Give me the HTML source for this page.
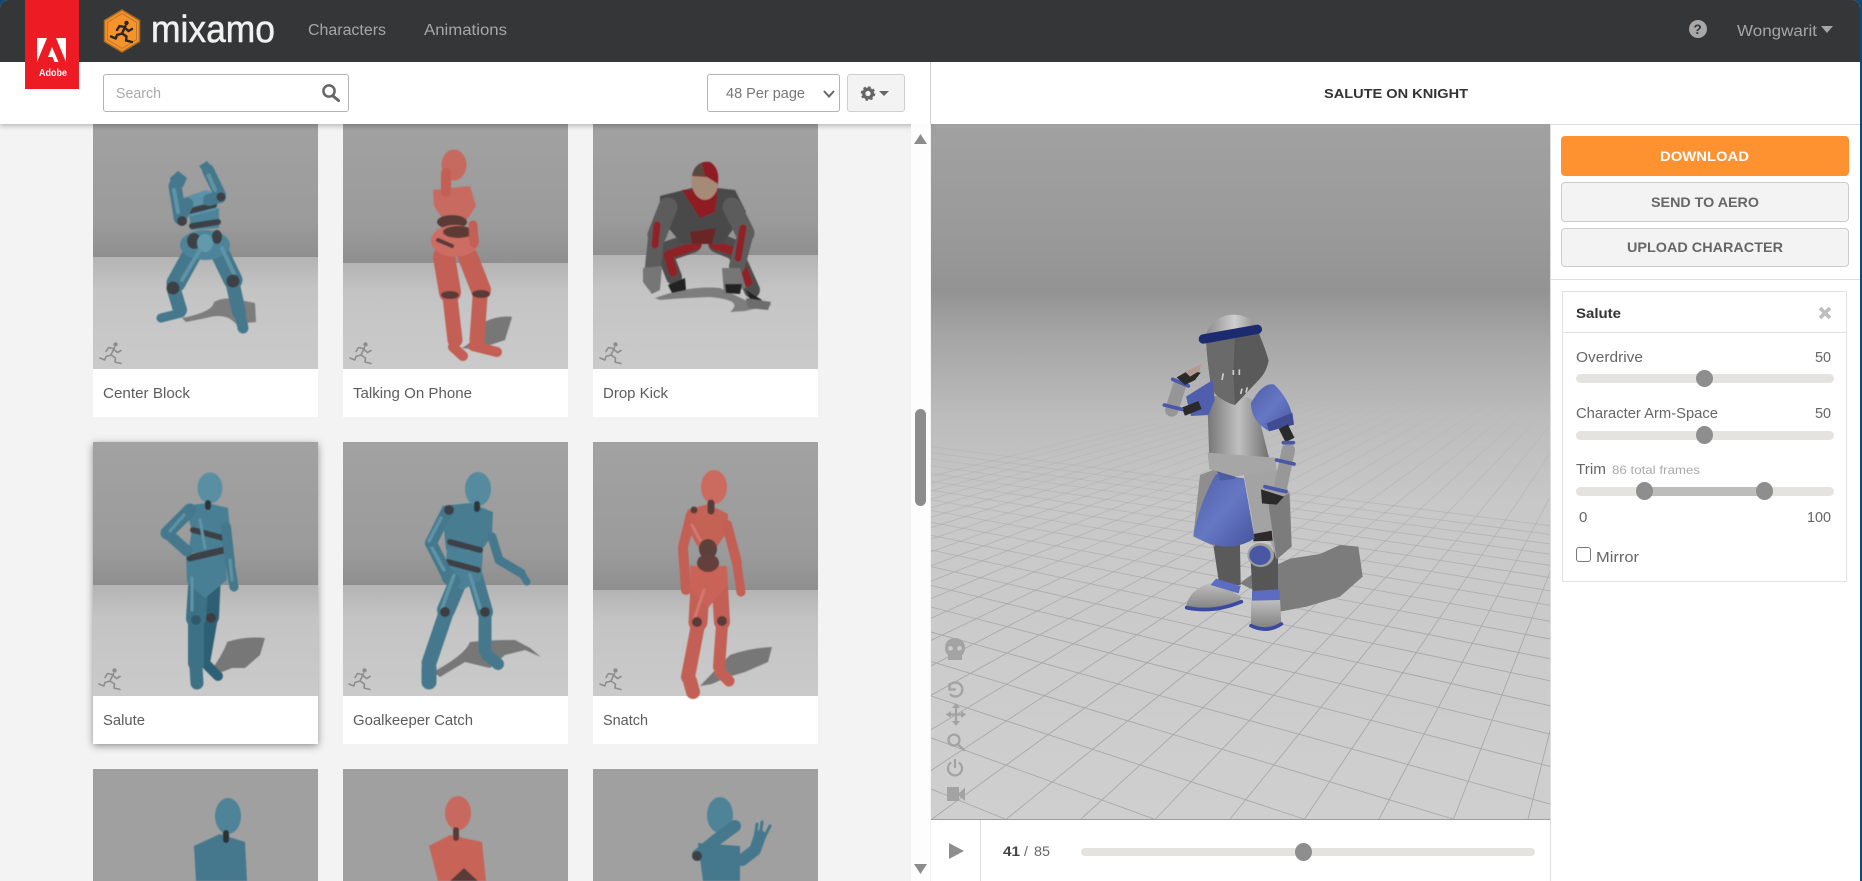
<!DOCTYPE html>
<html lang="en"><head><meta charset="utf-8"><title>Mixamo</title>
<style>
html,body{margin:0;padding:0;width:1862px;height:881px;overflow:hidden;background:#0d4a7c}
#app{position:absolute;left:0;top:0;width:1862px;height:881px;overflow:hidden;background:#f3f3f3;clip-path:inset(0 2px 0 0 round 8px 8px 0 0)}
#app>div{position:absolute;box-sizing:border-box}
svg{position:absolute;left:0;top:0}
text{font-family:"Liberation Sans",sans-serif;white-space:pre}
.lb{font-size:15px;fill:#5c5c5c}
.p{font-size:15px;fill:#666}
.btn{font-size:14px;font-weight:bold;fill:#666}
.track{background:#e4e3df;border-radius:5px;height:9px}
.thumb{background:#8e8e8e;border-radius:50%;width:17px;height:17px}
.g{fill:none;stroke-linecap:round;stroke-linejoin:round}
.t{stroke:#44788c}.td{stroke:#2f6174}.th{stroke:#5f93a6}.r{stroke:#c35f55}.rh{stroke:#d3786e}.k{stroke:#3e4144}.rk{stroke:#5a3b38}
</style></head><body>
<div id="app">
<svg width="1862" height="881" viewBox="0 0 1862 881">
<defs>
<linearGradient id="wall" x1="0" y1="0" x2="0" y2="1"><stop offset="0" stop-color="#a2a2a2"/><stop offset=".75" stop-color="#9b9b9b"/><stop offset="1" stop-color="#8f8f8f"/></linearGradient>
<linearGradient id="floor" x1="0" y1="0" x2="0" y2="1"><stop offset="0" stop-color="#b4b4b4"/><stop offset=".3" stop-color="#c4c4c4"/><stop offset="1" stop-color="#cacaca"/></linearGradient>
<linearGradient id="vw" x1="0" y1="124" x2="0" y2="820" gradientUnits="userSpaceOnUse">
<stop offset="0" stop-color="#a1a1a1"/><stop offset=".15" stop-color="#9a9a9a"/><stop offset=".24" stop-color="#939393"/><stop offset=".3" stop-color="#a4a4a4"/><stop offset=".42" stop-color="#bcbcbc"/><stop offset=".55" stop-color="#c8c8c8"/><stop offset="1" stop-color="#cfcfcf"/></linearGradient>
<linearGradient id="gl" x1="0" y1="370" x2="0" y2="640" gradientUnits="userSpaceOnUse"><stop offset="0" stop-color="#aaa" stop-opacity="0"/><stop offset="1" stop-color="#a8a8a8"/></linearGradient>
<linearGradient id="steel" x1="0" y1="0" x2="1" y2="0"><stop offset="0" stop-color="#757575"/><stop offset=".5" stop-color="#c0c0c0"/><stop offset="1" stop-color="#6e6e6e"/></linearGradient>
<linearGradient id="boot" x1="0" y1="0" x2="0" y2="1"><stop offset="0" stop-color="#c2c2c2"/><stop offset="1" stop-color="#808080"/></linearGradient>
<linearGradient id="dome" x1="0" y1="0" x2="1" y2="0"><stop offset="0" stop-color="#8a8a8a"/><stop offset=".55" stop-color="#cfcfcf"/><stop offset="1" stop-color="#8c8c8c"/></linearGradient>
<linearGradient id="blue" x1="0" y1="0" x2="1" y2="1"><stop offset="0" stop-color="#4f5fa8"/><stop offset=".5" stop-color="#6677c4"/><stop offset="1" stop-color="#46559e"/></linearGradient>
<clipPath id="vc"><rect x="931" y="124" width="619" height="696"/></clipPath>
<filter id="soft" x="-5%" y="-5%" width="110%" height="110%"><feGaussianBlur stdDeviation=".5"/></filter>
<filter id="sh" x="-10%" y="-10%" width="120%" height="120%"><feDropShadow dx="0" dy="2" stdDeviation="4" flood-color="#000" flood-opacity=".42"/></filter>
<symbol id="run" viewBox="0 0 22 22" overflow="visible">
<circle cx="15.5" cy="2.4" r="2.2" stroke="none" fill="currentColor"/>
<path d="M14.5 5.5L11 13M13.5 6.5L8.500 5.500L6 9.500M14 7.500L17.500 10.500L21 8.500M11 13L6 14.500L4.800 18L0 16M11 13L15.500 16L15 20L21 21.500" fill="none" stroke-linecap="round" stroke-linejoin="round"/>
</symbol>
</defs>

<!-- cards row 1 -->
<rect x="93" y="115" width="225" height="142" fill="url(#wall)"/><rect x="93" y="257" width="225" height="112" fill="url(#floor)"/><rect x="93" y="369" width="225" height="48" fill="#fff"/>
<rect x="343" y="115" width="225" height="148" fill="url(#wall)"/><rect x="343" y="263" width="225" height="106" fill="url(#floor)"/><rect x="343" y="369" width="225" height="48" fill="#fff"/>
<rect x="593" y="115" width="225" height="140" fill="url(#wall)"/><rect x="593" y="255" width="225" height="114" fill="url(#floor)"/><rect x="593" y="369" width="225" height="48" fill="#fff"/>
<!-- row 2 -->
<rect x="93" y="442" width="225" height="302" fill="#fff" filter="url(#sh)"/>
<rect x="93" y="442" width="225" height="143" fill="url(#wall)"/><rect x="93" y="585" width="225" height="111" fill="url(#floor)"/>
<rect x="343" y="442" width="225" height="143" fill="url(#wall)"/><rect x="343" y="585" width="225" height="111" fill="url(#floor)"/><rect x="343" y="696" width="225" height="48" fill="#fff"/>
<rect x="593" y="442" width="225" height="148" fill="url(#wall)"/><rect x="593" y="590" width="225" height="106" fill="url(#floor)"/><rect x="593" y="696" width="225" height="48" fill="#fff"/>
<!-- row 3 -->
<rect x="93" y="769" width="225" height="112" fill="#a0a0a0"/><rect x="343" y="769" width="225" height="112" fill="#a0a0a0"/><rect x="593" y="769" width="225" height="112" fill="#a0a0a0"/>

<g filter="url(#soft)">
<!-- Center Block -->
<path d="M182 318Q213 312 214 302Q225 296 240 300L255 303L256 322L236 324Q226 312 206 318L186 322Z" fill="#7d7d7d"/>
<g class="g t"><path stroke-width="19" d="M197 245L176 283"/><path stroke-width="14" d="M174 290L180 310"/><path stroke-width="9" d="M181 313L161 318"/>
<path stroke-width="19" d="M216 245L233 280"/><path stroke-width="14" d="M233 285L239 312"/><path stroke-width="11" d="M240 314L243 328"/></g>
<ellipse cx="205" cy="245" rx="25" ry="15" fill="#4d8499"/>
<ellipse cx="194" cy="241" rx="7" ry="8" fill="#3e4144"/><ellipse cx="217" cy="237" rx="5" ry="7" fill="#3e4144"/>
<ellipse cx="205" cy="243" rx="8" ry="9" fill="#6499ac"/>
<path d="M189 214L219 208L219 228L191 230Z" fill="#4d8499"/>
<path d="M183 198L206 190L220 195L216 210L188 217Z" fill="#5b92a7"/>
<path class="g k" stroke-width="6" d="M190 211L214 205M192 226L218 222"/>
<g class="g t"><path stroke-width="13" d="M187 204L180 218"/><path stroke-width="13" d="M180 216L175 186"/><path stroke-width="12" d="M209 200L220 197"/><path stroke-width="12" d="M220 195L208 170"/></g>
<path class="g th" stroke-width="4" d="M178 212L174 190M215 190L208 174M200 250L182 280M222 248L234 274"/>
<g fill="#3e4144"><circle cx="182" cy="221" r="5"/><circle cx="221" cy="197" r="4.500"/><circle cx="173" cy="288" r="6.500"/><circle cx="233" cy="281" r="6.500"/></g>
<path d="M170 178L178 171L187 178L183 187L171 187ZM199 166L207 161L214 170L206 175Z" fill="#44788c"/>

<!-- Talking on phone -->
<path d="M462 348Q480 338 484 322Q500 315 512 317L505 340L490 345L478 350Z" fill="#777"/>
<g class="g r"><path stroke-width="22" d="M444 257L450 292"/><path stroke-width="20" d="M468 257L481 290"/><path stroke-width="15" d="M450 297L455 340"/><path stroke-width="15" d="M480 297L477 340"/><path stroke-width="10" d="M453 347L463 356"/><path stroke-width="10" d="M473 346L497 352"/></g>
<ellipse cx="454" cy="165" rx="12.500" ry="15.500" fill="#c66b61"/>
<path d="M433 190L470 186L476 206L464 224L446 224L434 206Z" fill="#c86a60"/>
<ellipse cx="452" cy="222" rx="15" ry="7" fill="#5a3b38"/>
<ellipse cx="455" cy="241" rx="24" ry="16" fill="#cc6c62"/>
<ellipse cx="458" cy="232" rx="15" ry="6" fill="#5d3a36"/><path class="g rk" stroke-width="4" d="M438 240L452 246"/>
<path class="g r" stroke-width="10" d="M446 192L446 173"/><path class="g r" stroke-width="9" d="M473 225L474 243"/>
<g fill="#5a3b38"><ellipse cx="450" cy="295" rx="9" ry="4"/><ellipse cx="481" cy="294" rx="9" ry="4"/></g>

<!-- Drop Kick -->
<path d="M655 298Q690 285 720 288L745 300L772 305L745 311L730 312Q745 300 710 297Q680 298 660 300Z" fill="#7d7d7d"/>
<g class="g" stroke="#4e4e4e"><path stroke-width="20" d="M692 243L665 252"/><path stroke-width="16" d="M665 254L674 277"/><path stroke-width="20" d="M718 243L735 250"/><path stroke-width="16" d="M735 252L752 290"/></g>
<g class="g" stroke="#8e2027"><path stroke-width="9" d="M697 245L668 255L673 272M714 245L736 252L748 282"/></g>
<path d="M660 196L700 186L735 190L746 212L722 244L682 244L660 218Z" fill="#484848"/>
<path d="M682 190L718 188L715 212L700 218Z" fill="#8e1c22"/>
<path d="M690 232L716 228L712 244L692 244Z" fill="#6a2528"/>
<g class="g" stroke="#5c5c5c"><path stroke-width="19" d="M668 207L657 235"/><path stroke-width="16" d="M656 238L653 267"/><path stroke-width="19" d="M732 207L745 233"/><path stroke-width="16" d="M745 236L737 266"/></g>
<path class="g" stroke="#8e2027" stroke-width="7" d="M657 225L655 245M743 228L738 258"/>
<path fill="#767676" d="M643 268L662 266L660 290L652 294L643 282ZM722 268L740 268L746 288L724 294Z"/>
<path fill="#222" d="M668 285L685 278L686 290L672 293ZM725 284L742 284L740 294L726 293ZM746 290L762 300L752 304Z"/>
<path fill="#6d6d6d" d="M746 298L771 302L768 310L748 308Z"/>
<ellipse cx="705" cy="181" rx="13.500" ry="19" fill="#a58a78"/>
<path d="M692 176Q696 160 710 162Q720 168 718 184L707 177Z" fill="#8e1c22"/><path d="M692 176Q694 165 702 163L705 176Z" fill="#5a4a40"/>

<!-- Salute -->
<path d="M213 668Q225 650 227 642Q245 636 265 638L260 655L245 668L232 668L222 672Z" fill="#777"/>
<g class="g td"><path stroke-width="16" d="M213 573L211 617"/><path stroke-width="13" d="M211 620L204 660"/><path stroke-width="10" d="M207 665L218 676"/></g>
<g class="g" stroke="#3c7186"><path stroke-width="20" d="M199 573L196 618"/><path stroke-width="16" d="M196 622L196 663"/><path stroke-width="13" d="M196 667L197 683"/></g>
<path d="M184 506L207 503L228 508L230 530L224 553L188 553L192 530Z" fill="#4a7f94"/>
<path d="M186 556L225 552L227 580L205 598L187 582Z" fill="#4a7f94"/>
<path class="g k" stroke-width="6" d="M193 530L223 538"/><path class="g k" stroke-width="7" d="M190 558L224 550"/>
<ellipse cx="210" cy="488" rx="12.500" ry="15.500" fill="#5a8ea3"/>
<path class="g" stroke="#2d3538" stroke-width="6" d="M208 503L208 507"/>
<g class="g t"><path stroke-width="13" d="M190 510L167 533"/><path stroke-width="11" d="M167 533L187 551"/><path stroke-width="10" d="M226 527L230 563"/><path stroke-width="9" d="M230 563L234 587"/></g>
<path class="g th" stroke-width="3" d="M184 515L170 531M200 520L205 548M230 560L232 580M192 578L192 610"/>
<circle cx="196" cy="620" r="5" fill="#2f5a6c"/><circle cx="211" cy="618" r="5" fill="#3a3d40"/>

<!-- Goalkeeper Catch -->
<path d="M433 672Q465 655 470 642Q490 640 515 640L530 648L541 657L525 650L505 655L490 668L465 662L440 677Z" fill="#777"/>
<g class="g t"><path stroke-width="18" d="M463 570L446 610"/><path stroke-width="15" d="M446 613L429 663"/><path stroke-width="15" d="M429 668L429 682"/><path stroke-width="16" d="M473 570L485 612"/><path stroke-width="13" d="M485 615L485 650"/><path stroke-width="12" d="M487 655L498 664"/></g>
<path d="M442 506L470 503L493 512L492 535L482 550L446 550Z" fill="#467c91"/>
<path d="M447 548L483 552L481 580L462 590L445 580Z" fill="#4b8196"/>
<path class="g k" stroke-width="6" d="M450 542L480 550M448 562L478 570"/>
<ellipse cx="478" cy="489" rx="13" ry="17" fill="#558a9f"/>
<path class="g" stroke="#2d3538" stroke-width="6" d="M477 504L477 509"/>
<g class="g t"><path stroke-width="12" d="M446 513L431 543"/><path stroke-width="12" d="M431 543L446 573"/><path stroke-width="15" d="M449 577L453 581"/><path stroke-width="9" d="M492 537L499 560"/><path stroke-width="9" d="M499 560L521 573"/><path stroke-width="7" d="M522 574L527 582"/></g>
<path class="g th" stroke-width="3.500" d="M441 518L429 541M432 548L444 570M454 575L442 608M470 575L480 608"/>
<circle cx="445" cy="612" r="5" fill="#3a3d40"/><circle cx="485" cy="612" r="5" fill="#3a3d40"/><circle cx="449" cy="510" r="5" fill="#3e4144"/>

<!-- Snatch -->
<path d="M700 686Q715 670 730 655Q750 648 772 647L768 662L745 672L725 678L712 684Z" fill="#777"/>
<g class="g r"><path stroke-width="19" d="M700 587L698 622"/><path stroke-width="14" d="M698 625L688 677"/><path stroke-width="14" d="M690 681L693 692"/><path stroke-width="16" d="M720 587L722 622"/><path stroke-width="12" d="M722 625L719 667"/><path stroke-width="11" d="M720 672L729 681"/></g>
<path d="M687 510L708 504L728 514L727 532L716 548L700 550L691 535Z" fill="#c46257"/>
<ellipse cx="708" cy="549" rx="9" ry="10" fill="#5c3f3b"/>
<path d="M690 566L727 566L728 585L708 608L691 590Z" fill="#c96358"/>
<ellipse cx="708" cy="563" rx="11" ry="9" fill="#63403b"/>
<ellipse cx="714" cy="487" rx="13" ry="17" fill="#cb6a5f"/>
<path class="g rk" stroke-width="7" d="M711 503L711 511"/>
<g class="g r"><path stroke-width="10" d="M691 515L683 547"/><path stroke-width="10" d="M683 549L686 590"/><path stroke-width="10" d="M727 525L737 563"/><path stroke-width="9" d="M737 565L741 592"/></g>
<path class="g rh" stroke-width="3" d="M704 590L694 620M692 525L700 540"/>
<circle cx="697" cy="622" r="5" fill="#5a3b38"/><circle cx="722" cy="621" r="5" fill="#5a3b38"/><circle cx="694" cy="510" r="3.500" fill="#5a3b38"/>

<!-- row 3 figures -->
<path d="M194 846L220 834L245 842L247 881L196 881Z" fill="#44788c"/>
<ellipse cx="228" cy="816" rx="13" ry="18" fill="#4f8398"/>
<path class="g" stroke="#2c3033" stroke-width="6" d="M226 833L226 840"/>
<path d="M429 846L450 835L482 842L486 881L438 881Z" fill="#c86459"/>
<ellipse cx="458" cy="813" rx="13" ry="17" fill="#c7695e"/>
<path class="g rk" stroke-width="6" d="M456 830L456 838"/>
<path d="M450 881L464 868L478 881Z" fill="#5a3b38"/>
<path d="M698 843L740 846L740 881L703 881Z" fill="#44788c"/>
<ellipse cx="720" cy="815" rx="13" ry="18" fill="#4f8398"/>
<g class="g t" stroke-width="12"><path d="M698 855L716 840L735 826"/><path d="M742 860L755 850L760 836"/></g>
<path d="M755 838L757 824M760 838L762 822M764 838L770 826" class="g t" stroke-width="3"/>
<circle cx="697" cy="856" r="5" fill="#3e4144"/>
</g>

<g color="#8d8d8d" stroke="#8d8d8d" stroke-width="1.600">
<use href="#run" x="100" y="342" width="22" height="22"/><use href="#run" x="350" y="342" width="22" height="22"/><use href="#run" x="600" y="342" width="22" height="22"/>
<use href="#run" x="99" y="668" width="22" height="22"/><use href="#run" x="349" y="668" width="22" height="22"/><use href="#run" x="600" y="668" width="22" height="22"/>
</g>

<!-- viewer -->
<rect x="931" y="124" width="619" height="696" fill="url(#vw)"/>
<g clip-path="url(#vc)" fill="none" stroke="url(#gl)" stroke-width=".9">
<path d="M1660 290L1602.500 819M1660 290L1528 819M1660 290L1453.500 819M1660 290L1379 819M1660 290L1304.500 819M1660 290L1230 819M1660 290L1155.500 819M1660 290L1081 819M1660 290L1006.500 819M1660 290L932 819M1660 290L857.500 819M1660 290L783 819M1660 290L708.500 819M1660 290L634 819M1660 290L559.500 819M1660 290L485 819M1660 290L410.500 819M1660 290L336 819M1660 290L261.500 819M1660 290L187 819M1660 290L112.500 819M1660 290L38 819M1660 290L-36.500 819M1660 290L-111 819M1660 290L-185.500 819M1660 290L-260 819M1660 290L-334.500 819M1660 290L-409 819"/>
<path d="M-300 290L1005 819M-300 290L1154 819M-300 290L1304 819M-300 290L1453 819M-300 290L1604 819M-300 290L1754 819M-300 290L1904 819M-300 290L2054 819M-300 290L2204 819M-300 290L2354 819M-300 290L2504 819M-300 290L2654 819M-300 290L2804 819M-300 290L2954 819M-300 290L3104 819M-300 290L3254 819M-300 290L3404 819M-300 290L3554 819M-300 290L3704 819M-300 290L3854 819"/>
</g>

<!-- knight -->
<g transform="translate(1120 290) scale(.33333)" filter="url(#soft)">
<path d="M360 880Q420 830 480 820L510 806L600 792L660 765L715 770L728 860L660 920L560 950L480 965L400 900Z" fill="#7c7c7c"/>
<path d="M280 765L360 765L362 885L298 885Z" fill="#5a5a5a"/>
<path d="M390 785L474 785L474 912L398 912Z" fill="#565656"/>
<path d="M240 555L292 535L285 770L220 740Z" fill="#8e8e8e"/>
<path d="M372 555L462 525L510 610L515 770L470 808L452 755L405 750L395 680Z" fill="#a3a3a3"/>
<path d="M400 732L455 722L458 752L400 754Z" fill="#2f2b2b"/>
<path d="M445 640L508 610L515 770L470 808Z" fill="#7c7c7c"/>
<path d="M288 552L372 565L404 745Q320 798 220 737Q238 640 288 552Z" fill="url(#blue)"/>
<path d="M286 532L342 538L347 566L300 572Z" fill="#4c5ba2"/>
<path d="M262 325Q350 295 405 335L450 515L268 515Z" fill="url(#steel)"/>
<path d="M263 488L466 503L470 540L345 560L268 537Z" fill="#a6a6a6"/>
<path d="M258 148L412 120Q436 175 446 212Q440 245 418 268L345 345Q310 335 284 310L272 280Q262 215 258 148Z" fill="#5a5a5a"/>
<path d="M258 148L345 132L340 255L345 345Q310 335 284 310L272 280Q262 215 258 148Z" fill="#6a6a6a"/>
<path d="M258 132Q285 72 345 74Q395 78 414 116Z" fill="url(#dome)"/>
<path d="M250 147L412 118" stroke="#1f2a70" stroke-width="28" fill="none" stroke-linecap="round"/>
<path d="M362 312L366 296M378 308L382 292M306 270L310 250M340 255L340 240M358 255L358 238" stroke="#cfcfcf" stroke-width="5" fill="none"/>
<path d="M393 340Q425 278 462 283Q512 330 520 395L445 422Q393 392 393 340Z" fill="url(#blue)"/>
<path d="M440 400L517 368L522 404L447 424Z" fill="#3f4d95"/>
<path d="M490 410L510 450" stroke="#2a2a2a" stroke-width="30" fill="none"/>
<path d="M505 480L482 590" stroke="#989898" stroke-width="40" fill="none" stroke-linecap="round"/>
<path d="M470 510L522 522M435 590L498 605M490 458L520 458" stroke="#4a59a8" stroke-width="11" fill="none" stroke-linecap="round"/>
<path d="M423 598L492 620L470 644L426 640Z" fill="#2a2a2a"/>
<path d="M198 320L278 270L284 330L265 375L213 378Z" fill="#4f5fae"/>
<path d="M190 365L240 345" stroke="#2a2a2a" stroke-width="26" fill="none"/>
<path d="M155 360L180 282" stroke="#969696" stroke-width="40" fill="none" stroke-linecap="round"/>
<path d="M133 345L185 358M158 268L205 288" stroke="#4a59a8" stroke-width="11" fill="none" stroke-linecap="round"/>
<path d="M170 262L205 242L242 248L225 270L195 285Z" fill="#2b2b2b"/>
<path d="M195 245L245 222L238 243L210 260Z" fill="#b39b92"/>
<ellipse cx="422" cy="795" rx="40" ry="36" fill="#a0a0a0"/><ellipse cx="420" cy="796" rx="32" ry="29" fill="#4a58a4"/>
<path d="M198 950Q212 888 290 875L362 920Q365 942 300 955Q240 968 198 950Z" fill="url(#boot)"/>
<path d="M200 953Q280 970 364 935" stroke="#3b49a0" stroke-width="11" fill="none" stroke-linecap="round"/>
<path d="M272 885L288 866L362 888L356 910Z" fill="#5c6cc0"/>
<path d="M393 925L480 925L484 1002Q445 1028 393 1006Z" fill="url(#boot)"/>
<path d="M393 1007Q440 1030 484 1002" stroke="#3b49a0" stroke-width="11" fill="none" stroke-linecap="round"/>
<path d="M396 903L478 898L480 930L396 932Z" fill="#5c6cc0"/>
</g>

<!-- viewer icons -->
<g fill="#a3a3a3" stroke="none">
<path d="M955 638C961 638 965 642 965 648C965 652 963 654 962 655V660H948V655C947 654 945 652 945 648C945 642 949 638 955 638ZM950.500 646A2.300 2.300 0 1 0 950.501 646ZM959.500 646A2.300 2.300 0 1 0 959.501 646Z" fill-rule="evenodd"/>
<path d="M947 787H959V793L965 787.500V801L959 796V801H947Z"/>
</g>
<g fill="none" stroke="#a3a3a3" stroke-width="2.300" stroke-linecap="round">
<path d="M949.500 684V689.500H955M950 685A7 7 0 1 1 950.500 694.500"/>
<path d="M956 706V723M947.500 714.500H964.500"/>
<circle cx="954" cy="740" r="5.500"/><path d="M958.500 745L964 750"/>
<path d="M955 760V767M950.500 763A7 7 0 1 0 959.500 763"/>
</g>
<path d="M952 708L956 703L960 708ZM952 721L956 726L960 721ZM951 711L946 714.500L951 718ZM961 711L966 714.500L961 718Z" fill="#a3a3a3"/>
</svg>

<!-- toolbars -->
<div style="left:0;top:62px;width:930px;height:62px;background:#fff;box-shadow:0 2px 5px rgba(0,0,0,.25)"></div>
<div style="left:911px;top:124px;width:19px;height:757px;background:#fdfdfd"></div>
<div style="left:915px;top:409px;width:11px;height:97px;border-radius:6px;background:#8c8c8c"></div>
<div style="left:930px;top:62px;width:932px;height:62px;background:#fff;border-left:1px solid #d0d0d0"></div>
<div style="left:103px;top:74px;width:246px;height:38px;border:1px solid #b4b4b4;border-radius:3px;background:#fff"></div>
<div style="left:707px;top:74px;width:133px;height:38px;border:1px solid #b4b4b4;border-radius:3px;background:#fff"></div>
<div style="left:847px;top:74px;width:58px;height:38px;border:1px solid #cfcfcf;border-radius:3px;background:#f3f3f3"></div>
<!-- header -->
<div style="left:0;top:0;width:1862px;height:62px;background:#353638"></div>
<div style="left:25px;top:0;width:54px;height:89px;background:#ed1c24"></div>
<!-- right panel -->
<div style="left:1550px;top:124px;width:312px;height:757px;background:#fff;border-top:1px solid #ddd;border-left:1px solid #ddd"></div>
<div style="left:1561px;top:136px;width:288px;height:40px;background:#ff9230;border-radius:4px"></div>
<div style="left:1561px;top:182px;width:288px;height:40px;background:#f3f3f3;border:1px solid #ccc;border-radius:4px"></div>
<div style="left:1561px;top:228px;width:288px;height:39px;background:#f3f3f3;border:1px solid #ccc;border-radius:4px"></div>
<div style="left:1551px;top:279px;width:311px;height:1px;background:#ddd"></div>
<div style="left:1562px;top:291px;width:285px;height:291px;border:1px solid #e2e2e2;background:#fff"></div>
<div style="left:1562px;top:332px;width:285px;height:1px;background:#e2e2e2"></div>
<div class="track" style="left:1576px;top:374px;width:258px"></div><div class="thumb" style="left:1696px;top:370px"></div>
<div class="track" style="left:1576px;top:431px;width:258px"></div><div class="thumb" style="left:1696px;top:426px;height:18px"></div>
<div class="track" style="left:1576px;top:487px;width:258px"></div>
<div style="left:1644px;top:487px;width:120px;height:9px;background:#bdbdbb"></div>
<div class="thumb" style="left:1636px;top:482px;height:18px"></div><div class="thumb" style="left:1756px;top:482px;height:18px"></div>
<div style="left:1576px;top:547px;width:15px;height:15px;border:1px solid #777;border-radius:3px;background:#fff"></div>
<!-- play bar -->
<div style="left:931px;top:819px;width:619px;height:62px;background:#fff;border-top:1px solid #9c9c9c"></div>
<div style="left:980px;top:820px;width:1px;height:61px;background:#ddd"></div>
<div style="left:1081px;top:848px;width:454px;height:8px;border-radius:4px;background:#e4e3df"></div>
<div style="left:1295px;top:843px;width:17px;height:18px;border-radius:50%;background:#8e8e8e"></div>

<!-- top svg: icons + text -->
<svg width="1862" height="881" viewBox="0 0 1862 881">
<path d="M37 38H47L37 62ZM56 38H66V62ZM52 47L58.500 62H54.500L52.500 57H48Z" fill="#fff"/>
<text x="39" y="76" font-size="10.500" font-weight="bold" fill="#fff" textLength="28" lengthAdjust="spacingAndGlyphs">Adobe</text>
<path d="M122 10L139.500 20.500V41.500L122 52L104.500 41.500V20.500Z" fill="#f6932b" stroke="#a96c26" stroke-width="1.500"/>
<path d="M122 13.500L136.500 22.300V39.700L122 48.500L107.500 39.700V22.300Z" fill="none" stroke="#c07a2b" stroke-width="1"/>
<use href="#run" x="111" y="20" width="22" height="23" color="#2a2623" stroke="#2a2623" stroke-width="2.400"/>
<text x="151" y="42" font-size="38" fill="#f1f1f1" stroke="#f1f1f1" stroke-width=".5" textLength="124" lengthAdjust="spacingAndGlyphs">mixamo</text>
<text x="308" y="35" font-size="15.500" fill="#a6a6a6" textLength="78" lengthAdjust="spacingAndGlyphs">Characters</text>
<text x="424" y="35" font-size="15.500" fill="#a6a6a6" textLength="83" lengthAdjust="spacingAndGlyphs">Animations</text>

<circle cx="1698" cy="29" r="9" fill="#a8a8a8"/>
<text x="1693.500" y="34" font-size="13.500" font-weight="bold" fill="#353638">?</text>
<text x="1737" y="36" font-size="15.500" fill="#a6a6a6" textLength="80" lengthAdjust="spacingAndGlyphs">Wongwarit</text>
<path d="M1821 26H1833L1827 33Z" fill="#a6a6a6"/>

<text x="116" y="98" font-size="15" fill="#a9a9a9" textLength="45" lengthAdjust="spacingAndGlyphs">Search</text>
<circle cx="329" cy="91" r="5.600" fill="none" stroke="#666" stroke-width="2.500"/><path d="M333 96L338.500 100.500" stroke="#666" stroke-width="3" stroke-linecap="round"/>
<text x="726" y="98" font-size="15" fill="#777" textLength="79" lengthAdjust="spacingAndGlyphs">48 Per page</text>
<path d="M824 91L829 96.500L834 91" fill="none" stroke="#666" stroke-width="2"/>
<circle cx="868" cy="93.500" r="4.300" fill="none" stroke="#666" stroke-width="3.400"/>
<circle cx="868" cy="93.500" r="6.300" fill="none" stroke="#666" stroke-width="2" stroke-dasharray="2.500 2.450"/>
<path d="M879 91H889L884 96Z" fill="#666"/>

<text x="1324" y="98" font-size="13" font-weight="bold" fill="#333" textLength="144" lengthAdjust="spacingAndGlyphs">SALUTE ON KNIGHT</text>
<text x="1660" y="161" font-size="14" font-weight="bold" fill="#fff" textLength="89" lengthAdjust="spacingAndGlyphs">DOWNLOAD</text>
<text class="btn" x="1651" y="207" textLength="108" lengthAdjust="spacingAndGlyphs">SEND TO AERO</text>
<text class="btn" x="1627" y="252" textLength="156" lengthAdjust="spacingAndGlyphs">UPLOAD CHARACTER</text>

<text x="1576" y="318" font-size="14" font-weight="bold" fill="#333" textLength="45" lengthAdjust="spacingAndGlyphs">Salute</text>
<path d="M1820 308L1830 318M1830 308L1820 318" stroke="#bdbdbd" stroke-width="3.600"/>
<text class="p" x="1576" y="362" textLength="67" lengthAdjust="spacingAndGlyphs">Overdrive</text>
<text class="p" x="1815" y="362" textLength="16" lengthAdjust="spacingAndGlyphs">50</text>
<text class="p" x="1576" y="418" textLength="142" lengthAdjust="spacingAndGlyphs">Character Arm-Space</text>
<text class="p" x="1815" y="418" textLength="16" lengthAdjust="spacingAndGlyphs">50</text>
<text class="p" x="1576" y="474" textLength="30" lengthAdjust="spacingAndGlyphs">Trim</text>
<text x="1612" y="474" font-size="12" fill="#aaa" textLength="88" lengthAdjust="spacingAndGlyphs">86 total frames</text>
<text class="p" x="1579" y="522">0</text>
<text class="p" x="1807" y="522" textLength="24" lengthAdjust="spacingAndGlyphs">100</text>
<text class="p" x="1596" y="562" textLength="43" lengthAdjust="spacingAndGlyphs">Mirror</text>

<path d="M949 843L964 851L949 859Z" fill="#8e8e8e"/>
<text x="1003" y="856" font-size="14" font-weight="bold" fill="#444" textLength="17" lengthAdjust="spacingAndGlyphs">41</text>
<text x="1024" y="856" font-size="14" fill="#666">/</text>
<text x="1034" y="856" font-size="14" fill="#666" textLength="16" lengthAdjust="spacingAndGlyphs">85</text>

<path d="M914 144L920.500 134L927 144Z" fill="#8c8c8c"/>
<path d="M914 864L920.500 874L927 864Z" fill="#8c8c8c"/>

<text class="lb" x="103" y="398" textLength="87" lengthAdjust="spacingAndGlyphs">Center Block</text>
<text class="lb" x="353" y="398" textLength="119" lengthAdjust="spacingAndGlyphs">Talking On Phone</text>
<text class="lb" x="603" y="398" textLength="65" lengthAdjust="spacingAndGlyphs">Drop Kick</text>
<text class="lb" x="103" y="725" textLength="42" lengthAdjust="spacingAndGlyphs">Salute</text>
<text class="lb" x="353" y="725" textLength="120" lengthAdjust="spacingAndGlyphs">Goalkeeper Catch</text>
<text class="lb" x="603" y="725" textLength="45" lengthAdjust="spacingAndGlyphs">Snatch</text>
</svg>
</div>
</body></html>
